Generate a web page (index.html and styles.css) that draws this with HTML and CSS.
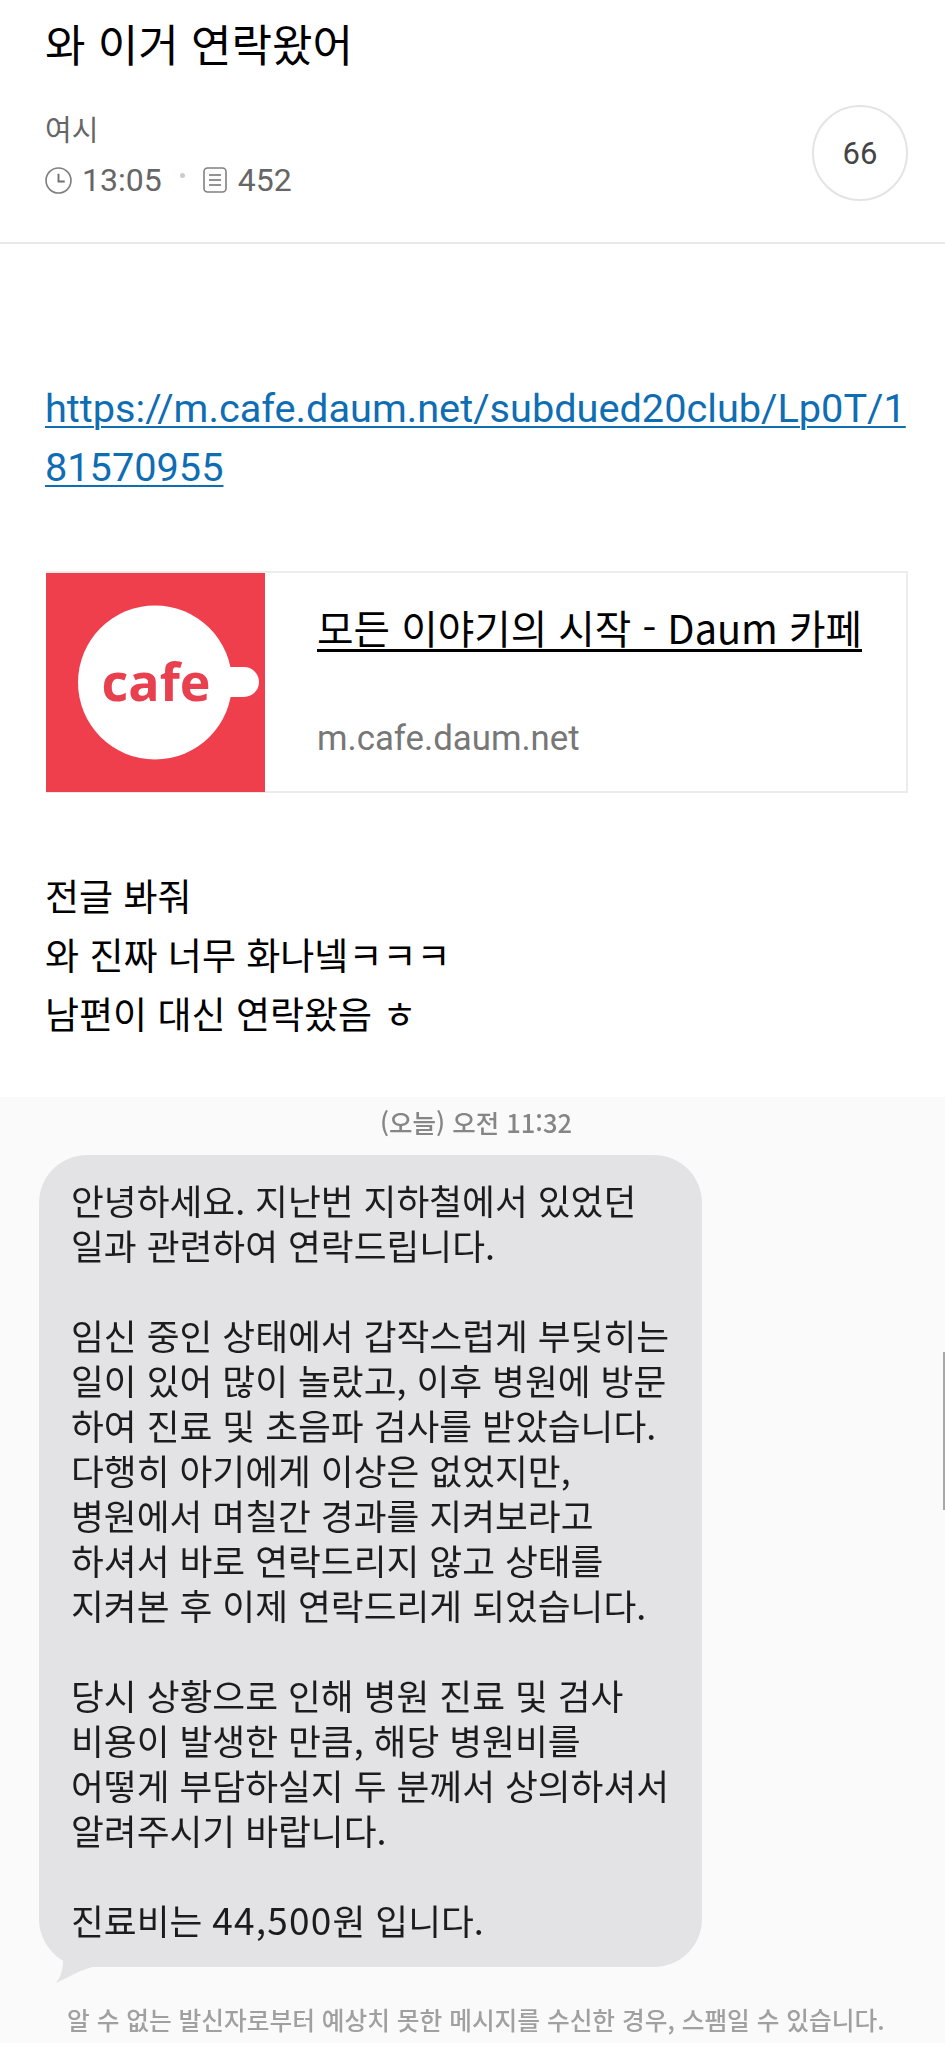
FILE: index.html
```html
<!DOCTYPE html>
<html lang="ko">
<head>
<meta charset="utf-8">
<title>와 이거 연락왔어</title>
<link rel="stylesheet" href="styles.css">
</head>
<body>
<header class="post-head">
  <h1 class="post-title">와 이거 연락왔어</h1>
  <div class="post-info">
    <div class="post-meta">
      <div class="author">여시</div>
      <div class="stats">
        <svg class="icon-clock" viewBox="0 0 26 26" aria-hidden="true"><circle cx="13" cy="13" r="12" fill="none" stroke="#808080" stroke-width="1.6"/><path d="M13 6.5V14h6" fill="none" stroke="#707070" stroke-width="1.8"/></svg>
        <span class="time">13:05</span>
        <span class="sep"></span>
        <svg class="icon-doc" viewBox="0 0 24 26" aria-hidden="true"><rect x="1" y="1" width="22" height="24" rx="3.5" fill="none" stroke="#808080" stroke-width="1.6"/><path d="M6 8h12M6 13h12M6 18h12" fill="none" stroke="#707070" stroke-width="1.7"/></svg>
        <span class="views">452</span>
      </div>
    </div>
    <div class="comment-count">66</div>
  </div>
</header>

<main class="post-body">
  <a class="post-link" href="#">https://m.cafe.daum.net/subdued20club/Lp0T/1<br>81570955</a>

  <a class="link-card" href="#">
    <span class="card-thumb">
      <svg class="cafe-logo" viewBox="0 0 219 219" aria-hidden="false">
        <rect width="219" height="219" fill="#ef3e4c"/>
        <circle cx="109" cy="109.500" r="77" fill="#fff"/>
        <path d="M180 94h18a15 15 0 0 1 0 30h-18z" fill="#fff"/>
        <text x="110" y="128" text-anchor="middle" class="cafe-word">cafe</text>
      </svg>
    </span>
    <span class="card-text">
      <span class="card-title">모든 이야기의 시작 - Daum 카페</span>
      <span class="card-domain">m.cafe.daum.net</span>
    </span>
  </a>

  <p class="post-text">전글 봐줘<br>와 진짜 너무 화나넼ㅋㅋㅋ<br>남편이 대신 연락왔음 ㅎ</p>
</main>

<section class="sms">
  <div class="sms-date">(오늘) 오전 11:32</div>
  <div class="bubble">
    <p>안녕하세요. 지난번 지하철에서 있었던<br>일과 관련하여 연락드립니다.</p>
    <p>임신 중인 상태에서 갑작스럽게 부딪히는<br>일이 있어 많이 놀랐고, 이후 병원에 방문<br>하여 진료 및 초음파 검사를 받았습니다.<br>다행히 아기에게 이상은 없었지만,<br>병원에서 며칠간 경과를 지켜보라고<br>하셔서 바로 연락드리지 않고 상태를<br>지켜본 후 이제 연락드리게 되었습니다.</p>
    <p>당시 상황으로 인해 병원 진료 및 검사<br>비용이 발생한 만큼, 해당 병원비를<br>어떻게 부담하실지 두 분께서 상의하셔서<br>알려주시기 바랍니다.</p>
    <p>진료비는 <span class="amount">44,500</span>원 입니다.</p>
    <svg class="bubble-tail" viewBox="0 0 40 34" aria-hidden="true"><path d="M6 0C8 10 8 24 0 34C10 30 20 22 40 17V0z" fill="#e3e3e5"/></svg>
  </div>
  <div class="sms-notice">알 수 없는 발신자로부터 예상치 못한 메시지를 수신한 경우, 스팸일 수 있습니다.</div>
  <div class="scroll-thumb"></div>
</section>
</body>
</html>
```

FILE: styles.css
```css
* { box-sizing: border-box; }
html, body { margin: 0; padding: 0; background: #fff; }
body {
  width: 945px;
  height: 2048px;
  overflow: hidden;
  font-family: "Roboto", "Noto Sans CJK KR", sans-serif;
  color: #111;
}
.post-head {
  height: 244px;
  padding: 11px 37px 0 45px;
  border-bottom: 2px solid #e9e9e9;
}
.post-title {
  margin: 0;
  font-family: "Noto Sans CJK KR", sans-serif;
  font-size: 44px;
  line-height: 64px;
  font-weight: 400;
  color: #000;
}
.post-info {
  display: flex;
  justify-content: space-between;
  align-items: flex-start;
  margin-top: 30px;
}
.post-meta { padding-top: 3px; }
.author {
  font-family: "Noto Sans CJK KR", sans-serif;
  font-size: 29px;
  line-height: 40px;
  color: #666;
}
.stats {
  display: flex;
  align-items: center;
  margin-top: 12px;
  height: 40px;
  font-size: 32px;
  color: #666;
}
.icon-clock { width: 27px; height: 27px; margin-right: 10px; }
.sep { width: 5px; height: 5px; border-radius: 50%; background: #ccc; margin: 0 18px 0 18px; position: relative; top: -5px; }
.icon-doc { width: 24px; height: 26px; margin-right: 11px; }
.comment-count {
  width: 96px;
  height: 96px;
  border: 2px solid #e4e4e4;
  border-radius: 50%;
  display: flex;
  align-items: center;
  justify-content: center;
  font-size: 31px;
  color: #444;
}
.post-body { padding: 135px 37px 0 45px; height: 853px; }
.post-link {
  display: block;
  font-size: 39.700px;
  line-height: 59px;
  color: #0f6db3;
  text-decoration: underline;
  text-decoration-thickness: 2px;
  text-underline-offset: 4px;
  white-space: nowrap;
}
.link-card {
  display: flex;
  margin: 74px 0 0 1px;
  height: 222px;
  border: 2px solid #ececec;
  border-left: 0;
  text-decoration: none;
  color: inherit;
}
.card-thumb { display: block; width: 219px; height: 219px; flex: none; }
.cafe-logo { display: block; width: 219px; height: 219px; }
.cafe-word {
  font-family: "Open Sans", sans-serif;
  font-size: 52px;
  font-weight: 700;
  fill: #e8404e;
}
.card-text { display: flex; flex-direction: column; padding: 29px 0 0 52px; }
.card-title {
  font-family: "Noto Sans CJK KR", sans-serif;
  font-size: 39.700px;
  line-height: 50px;
  color: #000;
  text-decoration: underline;
  text-decoration-thickness: 3px;
  text-underline-offset: 5px;
  white-space: nowrap;
}
.card-domain {
  margin-top: 64px;
  font-size: 34.800px;
  line-height: 44px;
  color: #777;
}
.post-text {
  margin: 73px 0 0;
  font-family: "Noto Sans CJK KR", sans-serif;
  font-size: 37px;
  line-height: 59px;
  color: #000;
  white-space: nowrap;
}
.sms {
  position: relative;
  height: 946px;
  background: #fafafa;
  padding-top: 9px;
  font-family: "Noto Sans CJK KR", sans-serif;
}
.sms-date {
  text-align: center;
  padding-left: 7px;
  font-size: 25.500px;
  line-height: 32px;
  font-weight: 500;
  color: #868686;
  filter: blur(0.5px);
}
.bubble {
  position: relative;
  width: 663px;
  margin: 17px 0 0 39px;
  height: 812px;
  padding: 22px 20px 0 32px;
  border-radius: 48px;
  background: #e3e3e5;
  color: #1c1c1c;
  font-size: 35.700px;
  line-height: 45px;
  white-space: nowrap;
}
.bubble p { margin: 0 0 45px; filter: blur(0.4px); }
.amount { font-size: 37px; letter-spacing: 1.200px; }
.bubble-tail { position: absolute; left: 17px; bottom: -16px; width: 40px; height: 34px; }
.sms-notice {
  margin-top: 35px;
  padding-left: 67px;
  font-size: 24.700px;
  font-weight: 500;
  line-height: 34px;
  color: #a0a0a0;
  white-space: nowrap;
  filter: blur(0.5px);
}
.scroll-thumb {
  position: absolute;
  right: 0;
  top: 255px;
  width: 2px;
  height: 158px;
  background: #a8a8a8;
}
```
